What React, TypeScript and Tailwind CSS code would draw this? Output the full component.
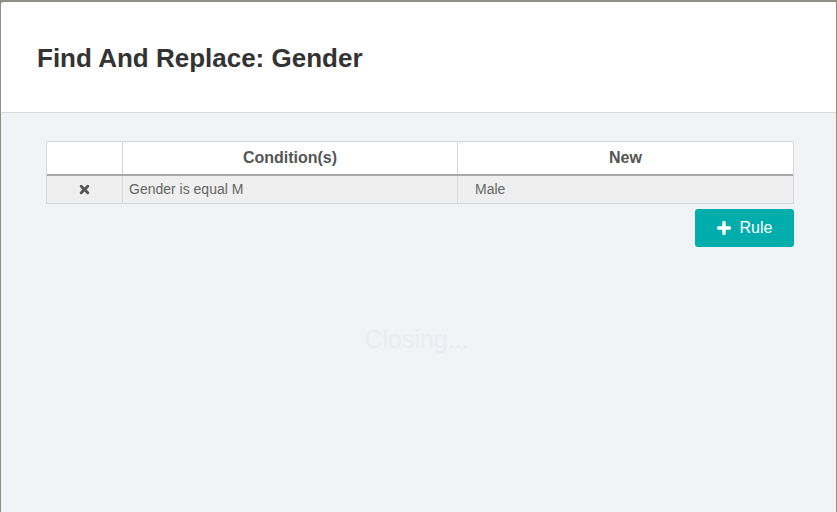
import React from "react";

export default function App() {
  return (
    <div className="w-[837px] h-[512px] bg-[#8f8f85] pt-[2px] pl-[1px] overflow-hidden font-['Liberation_Sans',Arial,sans-serif]">
      <div className="w-[835px] h-[510px] flex flex-col rounded-tl-[3px] overflow-hidden bg-[#f2f3f7]">
        <div className="h-[111px] shrink-0 bg-white border-b border-[#d9d9d9] pl-[36px] pt-[43px]">
          <h1 className="text-[26px] font-bold text-[#333] leading-none">Find And Replace: Gender</h1>
        </div>
        <div className="flex-1 flex flex-col px-[45px] pt-[28px] relative">
          <div className="w-[748px] border border-[#d6d6d6] bg-white">
            <div className="flex h-[34px] border-b-2 border-[#a8a8a8] text-[16px] font-bold text-[#555]">
              <div className="w-[76px] border-r border-[#d6d6d6]"></div>
              <div className="w-[335px] border-r border-[#d6d6d6] flex items-center justify-center">Condition(s)</div>
              <div className="flex-1 flex items-center justify-center">New</div>
            </div>
            <div className="flex h-[27px] bg-[#efefef] text-[14px] text-[#666]">
              <div className="w-[76px] border-r border-[#d6d6d6] flex items-center justify-center">
                <svg width="11" height="11" viewBox="0 0 10 10">
                  <path d="M2 2 L8 8 M8 2 L2 8" stroke="#555" strokeWidth="2.6" strokeLinecap="round" />
                </svg>
              </div>
              <div className="w-[335px] border-r border-[#d6d6d6] flex items-center pl-[6px]">Gender is equal M</div>
              <div className="flex-1 flex items-center pl-[17px]">Male</div>
            </div>
          </div>
          <div className="w-[748px] flex justify-end mt-[5px]">
            <button className="w-[99px] h-[38px] bg-[#00adad] rounded-[3px] text-white text-[16px] flex items-center justify-center gap-[9px]">
              <svg width="14" height="14" viewBox="0 0 14 14">
                <path d="M7 1.5 V12.5 M1.5 7 H12.5" stroke="white" strokeWidth="3.4" strokeLinecap="round" />
              </svg>
              <span>Rule</span>
            </button>
          </div>
          <div className="absolute left-0 right-[4px] top-[214px] flex justify-center">
            <span className="text-[25px] leading-none text-[#eaecf0]">Closing...</span>
          </div>
        </div>
      </div>
    </div>
  );
}
